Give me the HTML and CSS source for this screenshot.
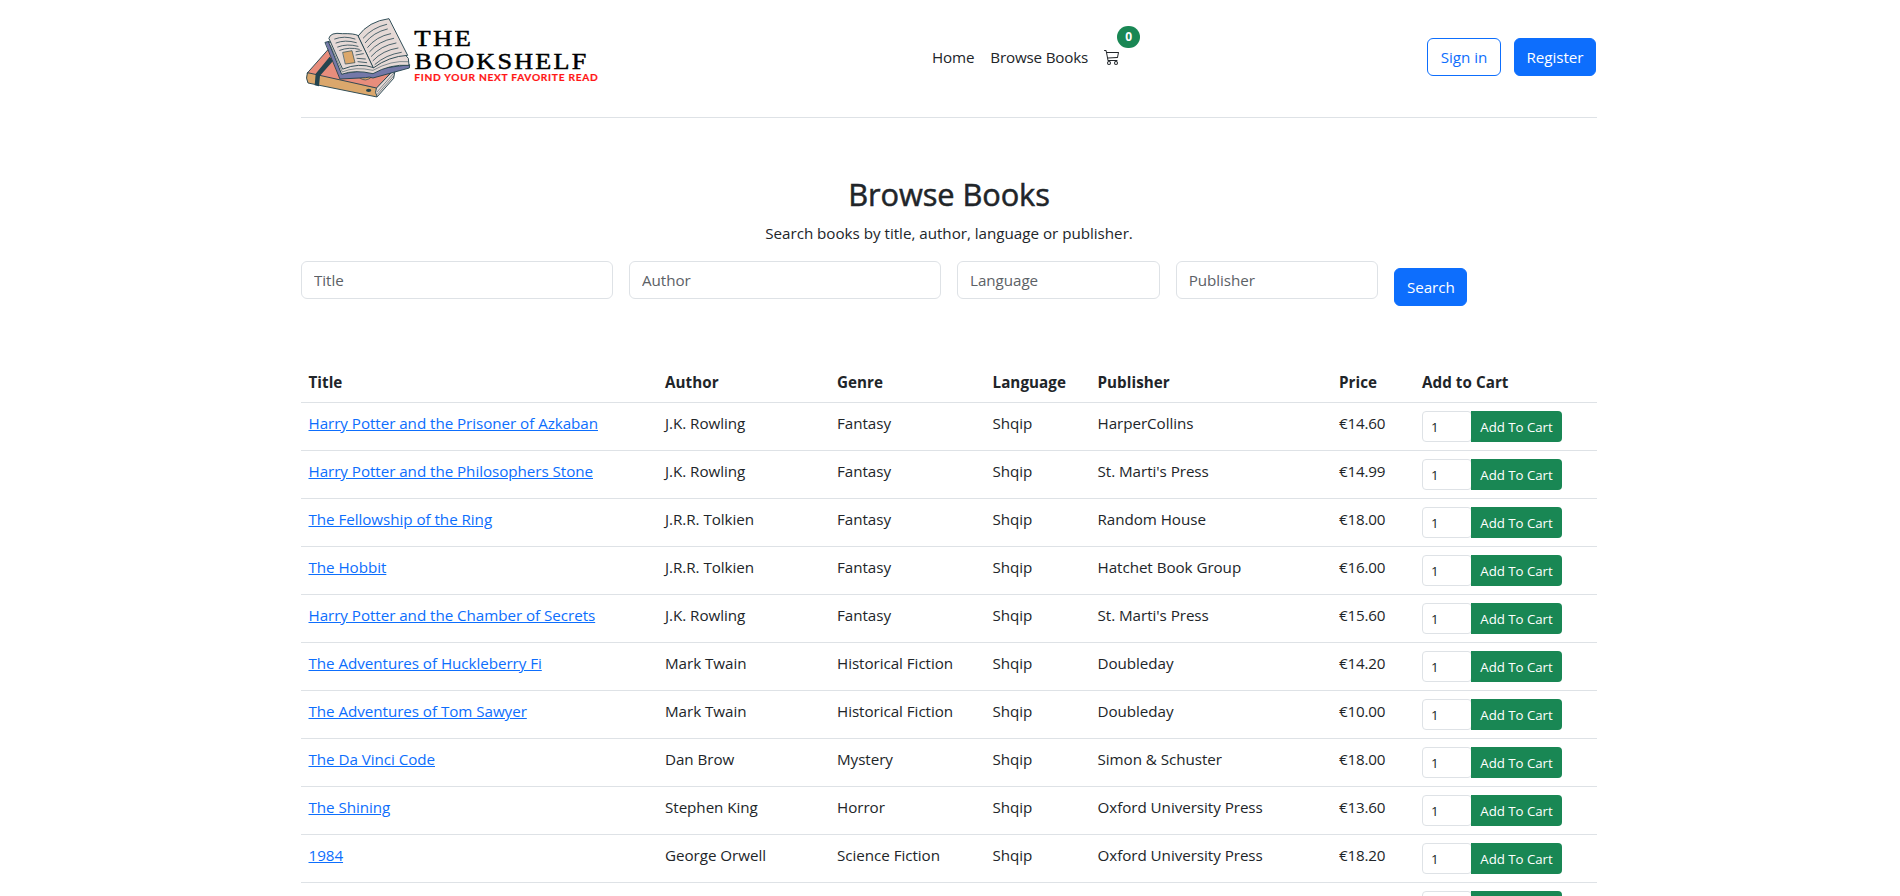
FILE: index.html
```html
<!DOCTYPE html>
<html lang="en">
<head>
<meta charset="utf-8">
<title>The Bookshelf - Browse Books</title>
<link rel="stylesheet" href="styles.css">
</head>
<body>
<div class="container">
  <header class="header">
    <a class="brand" href="#">
      <svg class="logo" viewBox="301 8 300 94" role="img" aria-label="The Bookshelf">
        <g transform="translate(300 10) scale(.33333)" stroke="#24444f" stroke-width="2.8" stroke-linejoin="round" stroke-linecap="round">
          <path fill="#e88d7c" d="M22 189 84 119 284 176 229 236 60 205z"/>
          <path fill="#dba76c" d="M22 189Q16 205 24 219L231 261 229 235z"/>
          <path fill="#e5d9d6" d="M229 235Q222 248 232 260L281 205 286 176z"/>
          <path fill="none" stroke-width="1.6" d="M231 246 281 190M232 253 281 198"/>
          <path fill="#24444f" stroke="none" d="M89 140 99 153 60 197 57 229 44 226 47 191z"/>
          <path fill="#dba76c" stroke-width="2" d="M178 203Q197 219 216 200"/>
          <ellipse cx="206" cy="241" rx="8" ry="5" fill="#24444f" stroke="none"/>
          <path fill="#7478a8" d="M76 97 87 94 126 191 190 182 329 164 328 174 219 204Q207 199 197 203L121 207z"/>
          <path fill="#e5d9d6" d="M86 97 125 193Q163 178 219 191 270 162 327 166L325 145 302 120z"/>
          <path fill="none" stroke-width="1.6" d="M91 105 127 186Q164 169 219 181 274 150 324 155"/>
          <path fill="#e5d9d6" d="M87 84Q91 66 127 71 163 70 175 77L221 173Q177 157 129 177z"/>
          <path fill="#e5d9d6" d="M175 77Q206 34 267 26L323 136Q267 139 221 173z"/>
          <path fill="none" stroke-width="2.4" d="M104 87Q133 76 165 87M108 99Q135 88 169 98M113 111Q141 100 174 109M168 125 184 122M168 135 190 131M171 145 196 147M174 155 200 158M119 121Q148 110 178 118M190 84Q217 53 260 43M196 98Q220 67 262 57M203 112Q228 80 272 71M209 125Q236 93 281 85M214 139Q242 107 288 99M219 152Q248 121 294 114M225 163Q258 134 304 127"/>
          <path fill="#dba76c" stroke-width="2" d="M129 127 156 122 165 158 137 162z"/>
        </g>
        <text class="logo-name" x="414.3" y="46.4" textLength="59" lengthAdjust="spacingAndGlyphs">THE</text>
        <text class="logo-name" x="414.5" y="69" textLength="174" lengthAdjust="spacingAndGlyphs">BOOKSHELF</text>
        <text class="logo-tag" x="414.3" y="80.7" textLength="183.5">FIND YOUR NEXT FAVORITE READ</text>
      </svg>
    </a>
    <nav class="nav">
      <a href="#">Home</a>
      <a href="#">Browse Books</a>
      <a class="cart" href="#" aria-label="Cart">
        <svg width="16" height="16" viewBox="0 0 16 16" fill="currentColor"><path d="M0 1.5A.5.5 0 0 1 .5 1H2a.5.5 0 0 1 .485.379L2.89 3H14.5a.5.5 0 0 1 .49.598l-1 5a.5.5 0 0 1-.465.401l-9.397.472L4.415 11H13a.5.5 0 0 1 0 1H4a.5.5 0 0 1-.491-.408L2.01 3.607 1.61 2H.5a.5.5 0 0 1-.5-.5zM3.102 4l.84 4.479 9.144-.459L13.89 4H3.102zM5 12a2 2 0 1 0 0 4 2 2 0 0 0 0-4zm7 0a2 2 0 1 0 0 4 2 2 0 0 0 0-4zm-7 1a1 1 0 1 1 0 2 1 1 0 0 1 0-2zm7 0a1 1 0 1 1 0 2 1 1 0 0 1 0-2z"/></svg>
        <span class="badge">0</span>
      </a>
    </nav>
    <div class="account">
      <button class="btn btn-outline sign-in">Sign in</button>
      <button class="btn btn-primary register">Register</button>
    </div>
  </header>

  <main>
    <h2 class="heading">Browse Books</h2>
    <p class="lead">Search books by title, author, language or publisher.</p>
    <form class="search">
      <input class="field" placeholder="Title">
      <input class="field" placeholder="Author">
      <input class="field" placeholder="Language">
      <input class="field" placeholder="Publisher">
      <button type="button" class="btn btn-primary search-btn">Search</button>
    </form>

    <table class="books">
      <colgroup><col class="c-title"><col class="c-author"><col class="c-genre"><col class="c-lang"><col class="c-pub"><col class="c-price"><col></colgroup>
      <thead>
        <tr><th>Title</th><th>Author</th><th>Genre</th><th>Language</th><th>Publisher</th><th>Price</th><th>Add to Cart</th></tr>
      </thead>
      <tbody>
        <tr><td><a href="#">Harry Potter and the Prisoner of Azkaban</a></td><td>J.K. Rowling</td><td>Fantasy</td><td>Shqip</td><td>HarperCollins</td><td>€14.60</td><td><div class="add"><input value="1"><button>Add To Cart</button></div></td></tr>
        <tr><td><a href="#">Harry Potter and the Philosophers Stone</a></td><td>J.K. Rowling</td><td>Fantasy</td><td>Shqip</td><td>St. Marti's Press</td><td>€14.99</td><td><div class="add"><input value="1"><button>Add To Cart</button></div></td></tr>
        <tr><td><a href="#">The Fellowship of the Ring</a></td><td>J.R.R. Tolkien</td><td>Fantasy</td><td>Shqip</td><td>Random House</td><td>€18.00</td><td><div class="add"><input value="1"><button>Add To Cart</button></div></td></tr>
        <tr><td><a href="#">The Hobbit</a></td><td>J.R.R. Tolkien</td><td>Fantasy</td><td>Shqip</td><td>Hatchet Book Group</td><td>€16.00</td><td><div class="add"><input value="1"><button>Add To Cart</button></div></td></tr>
        <tr><td><a href="#">Harry Potter and the Chamber of Secrets</a></td><td>J.K. Rowling</td><td>Fantasy</td><td>Shqip</td><td>St. Marti's Press</td><td>€15.60</td><td><div class="add"><input value="1"><button>Add To Cart</button></div></td></tr>
        <tr><td><a href="#">The Adventures of Huckleberry Fi</a></td><td>Mark Twain</td><td>Historical Fiction</td><td>Shqip</td><td>Doubleday</td><td>€14.20</td><td><div class="add"><input value="1"><button>Add To Cart</button></div></td></tr>
        <tr><td><a href="#">The Adventures of Tom Sawyer</a></td><td>Mark Twain</td><td>Historical Fiction</td><td>Shqip</td><td>Doubleday</td><td>€10.00</td><td><div class="add"><input value="1"><button>Add To Cart</button></div></td></tr>
        <tr><td><a href="#">The Da Vinci Code</a></td><td>Dan Brow</td><td>Mystery</td><td>Shqip</td><td>Simon &amp; Schuster</td><td>€18.00</td><td><div class="add"><input value="1"><button>Add To Cart</button></div></td></tr>
        <tr><td><a href="#">The Shining</a></td><td>Stephen King</td><td>Horror</td><td>Shqip</td><td>Oxford University Press</td><td>€13.60</td><td><div class="add"><input value="1"><button>Add To Cart</button></div></td></tr>
        <tr><td><a href="#">1984</a></td><td>George Orwell</td><td>Science Fiction</td><td>Shqip</td><td>Oxford University Press</td><td>€18.20</td><td><div class="add"><input value="1"><button>Add To Cart</button></div></td></tr>
        <tr><td></td><td></td><td></td><td></td><td></td><td></td><td><div class="add"><input aria-label="Quantity"><button aria-label="Add To Cart"></button></div></td></tr>
      </tbody>
    </table>
  </main>
</div>
</body>
</html>
```

FILE: styles.css
```css
* { box-sizing: border-box; }
html, body { height: 896px; overflow: hidden; }
body {
  margin: 0;
  background: #fff;
  color: #212529;
  font: 15.2px/24px "Open Sans", "Noto Sans", sans-serif;
  letter-spacing: -0.05px;
}
input, button { font: inherit; letter-spacing: inherit; color: inherit; }
.container { width: 1296px; margin-left: 301px; }

.header {
  display: grid;
  grid-template-columns: 631px 1fr auto;
  height: 118px;
  border-bottom: 1px solid #dee2e6;
}
.brand { display: block; padding-top: 8px; }
.logo { display: block; width: 300px; height: 94px; }
.logo-name { font: 23.5px "Liberation Serif", serif; letter-spacing: 2px; stroke: #000; stroke-width: .5px; fill: #000; }
.logo-tag { font: 700 10.2px Lato, sans-serif; letter-spacing: 0; fill: #ff1616; stroke: #ff1616; stroke-width: .2px; }
.nav { display: flex; gap: 16px; padding-top: 45px; letter-spacing: -0.17px; }
.nav a { color: #212529; text-decoration: none; white-space: nowrap; }
.cart { position: relative; width: 16px; }
.cart svg { display: block; margin-top: 4px; }
.badge {
  position: absolute;
  left: 13px;
  top: -19px;
  width: 23px;
  height: 22px;
  border-radius: 11px;
  background: #198754;
  color: #fff;
  font-size: 12px;
  font-weight: 700;
  line-height: 22px;
  text-align: center;
}
.account { display: flex; gap: 13px; padding: 38px 1px 0 0; }
.btn { height: 38px; padding: 0; border: 1px solid #0d6efd; border-radius: 6px; }
.btn-primary { background: #0d6efd; color: #fff; }
.btn-outline { background: #fff; color: #0d6efd; }
.sign-in { width: 74px; }
.register { width: 82px; }

.heading { margin: 57px 0 8px; font-size: 30.8px; font-weight: 500; line-height: 38px; letter-spacing: -0.1px; text-align: center; -webkit-text-stroke: .5px #212529; }
.lead { margin: 0 0 16px; letter-spacing: -0.02px; text-align: center; }
.search { display: grid; grid-template-columns: 312px 312px 202.67px 202.67px 73px; gap: 16px; align-items: start; }
.field { width: 100%; height: 38px; padding: 0 12px; border: 1px solid #dee2e6; border-radius: 6px; background: #fff; }
.field::placeholder { color: #5c6166; opacity: 1; }
.search-btn { margin-top: 7px; }

.books { width: 1296px; margin-top: 56px; border-collapse: separate; border-spacing: 0; table-layout: fixed; }
.c-title { width: 356.5px; }
.c-author { width: 172px; }
.c-genre { width: 155.5px; }
.c-lang { width: 105px; }
.c-pub { width: 241.5px; }
.c-price { width: 83px; }
.books th, .books td { padding: 8px 7.5px; border-bottom: 1px solid #dee2e6; text-align: left; vertical-align: top; white-space: nowrap; }
.books th { font-weight: 700; letter-spacing: .05px; }
.books a { color: #0d6efd; text-decoration: underline; }
.books td:nth-child(6) { letter-spacing: -0.2px; }
.add { display: flex; height: 31px; font-size: 13.3px; letter-spacing: -0.05px; }
.add input { width: 50px; height: 31px; padding: 0 8px; border: 1px solid #dee2e6; border-radius: 4px; }
.add button { width: 91px; height: 31px; margin-left: -1px; padding: 0; border: 0; border-radius: 0 4px 4px 0; background: #198754; color: #fff; }
```
